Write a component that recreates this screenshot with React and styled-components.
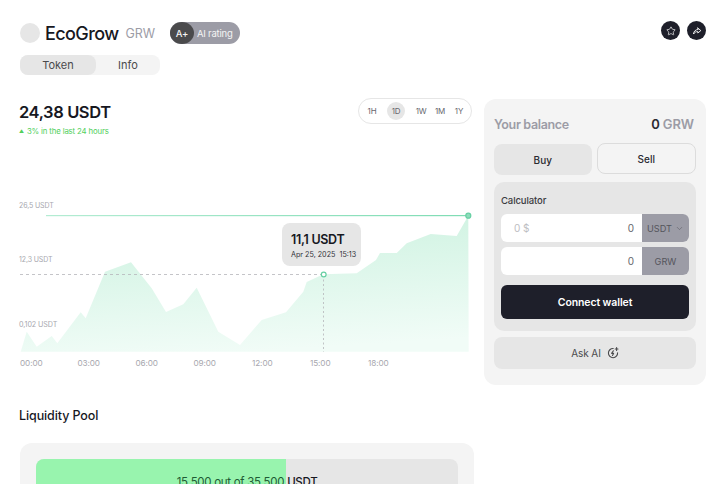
import React from "react";
import styled, { createGlobalStyle } from "styled-components";
import { Star, ChevronDown } from "lucide-react";

const Global = createGlobalStyle`
  html, body { margin: 0; padding: 0; background: #fff; height: 484px; overflow: hidden; }
  body { font-family: Inter, "Liberation Sans", sans-serif; color: #17181f; }
  * { box-sizing: border-box; }
`;
const Page = styled.div`
  width: 724px; height: 484px; overflow: hidden; padding: 21px 18px 0 19px;
`;
const Header = styled.header`display: flex; justify-content: space-between; align-items: flex-start;`;
const TitleRow = styled.div`display: flex; align-items: center; height: 24px;`;
const Logo = styled.div`width: 20px; height: 20px; border-radius: 50%; background: #e6e6e6; margin-left: 1px; margin-right: 5px;`;
const Name = styled.h1`margin: 0; font-size: 18px; font-weight: 500; letter-spacing: -0.6px;`;
const Ticker = styled.span`font-size: 12.5px; color: #9c9ca6; margin-left: 7px; letter-spacing: -0.1px;`;
const Rating = styled.div`
  display: flex; align-items: center; height: 22px; width: 70px; margin-left: 15px; border-radius: 11px;
  background: #9c9ca6; color: #f4f4f4; font-size: 9.5px; letter-spacing: -0.2px;
`;
const Grade = styled.span`
  display: flex; align-items: center; justify-content: center; width: 24px; height: 22px; border-radius: 50%;
  background: #4a4a4c; margin-right: 3px; font-weight: 500;
`;
const Tabs = styled.div`display: flex; width: 140px; height: 20px; margin: 10px 0 0 1px; background: #f4f4f4; border-radius: 8px;`;
const Tab = styled.div`
  flex: ${p => (p.$active ? "0 0 76px" : "1")}; display: flex; align-items: center; justify-content: center; font-size: 11px; color: #4a4a4c; border-radius: 8px;
  background: ${p => (p.$active ? "#e6e6e6" : "transparent")};
`;
const Actions = styled.div`display: flex; gap: 7px;`;
const IconBtn = styled.button`
  width: 19px; height: 19px; padding: 0; border: 0; border-radius: 50%; background: #1e1f2a; color: #fff;
  display: flex; align-items: center; justify-content: center;
`;
const Columns = styled.main`display: flex; align-items: flex-start; margin-top: 22px;`;
const Left = styled.section`width: 455px; margin-right: 10px;`;
const PriceRow = styled.div`display: flex; justify-content: space-between; align-items: flex-start;`;
const Price = styled.div`font-size: 16.5px; font-weight: 600; letter-spacing: -0.4px; line-height: 22px; margin-top: 4px;`;
const Change = styled.div`display: flex; align-items: center; font-size: 7.8px; color: #52cf5d; margin-top: 2px; line-height: 12px; letter-spacing: -0.15px;`;
const Arrow = styled.span`font-size: 5px; margin-right: 3px;`;
const Range = styled.div`
  display: flex; align-items: center; width: 114px; height: 26px; margin: 1px 2px 0 0; padding: 0 0 0 7px; border: 1px solid #e6e6e6; border-radius: 13px;
`;
const RangeItem = styled.span`
  font-size: 8px; color: #66666d; height: 18px; width: ${p => (p.$active ? "18px" : "12px")}; margin-left: ${p => p.$gap || 0}px; border-radius: 9px; display: flex; align-items: center; justify-content: center;
  background: ${p => (p.$active ? "#e6e6e6" : "transparent")}; letter-spacing: -0.2px;
`;
const ChartSvg = styled.svg`display: block; width: 460px; height: 260px; margin-top: -7px; margin-left: -1px;`;
const AxisText = styled.text`font-family: Inter, sans-serif; font-size: ${p => p.$size}px; fill: #a7a7ae; letter-spacing: -0.1px;`;
const Tip = styled.div`
  width: 79px; height: 43px; padding: 8.5px 0 0 9px; border-radius: 8px; background: #e6e6e6;
`;
const TipValue = styled.div`font-size: 12.5px; font-weight: 600; line-height: 16px; letter-spacing: -0.3px;`;
const TipDate = styled.div`font-size: 7.2px; line-height: 12px; margin-top: 1px; color: #33333a; white-space: nowrap;`;
const Section = styled.h2`margin: 17px 0 0 0; font-size: 12.5px; font-weight: 500; line-height: 18px; letter-spacing: -0.1px;`;
const PoolCard = styled.div`width: 454px; margin: 18px 0 0 1px; padding: 16px; background: #f4f4f4; border-radius: 12px;`;
const Pool = styled.div`position: relative; height: 40px; background: #e6e6e6; border-radius: 8px; overflow: hidden;`;
const PoolFill = styled.div`position: absolute; inset: 0 auto 0 0; background: #98f4ae;`;
const PoolText = styled.div`position: relative; text-align: center; font-size: 11.5px; line-height: 16px; padding-top: 15px; color: #1f5c35; letter-spacing: -0.3px;`;
const Dark = styled.span`color: #17181f; font-weight: 500;`;
const Panel = styled.aside`
  width: 222px; padding: 10px; margin-top: 2px; height: 286px; background: #f4f4f4; border-radius: 12px;
`;
const BalanceRow = styled.div`display: flex; justify-content: space-between; align-items: center; height: 30px; padding: 0 2px 0 0;`;
const BalanceLabel = styled.span`font-size: 12.5px; font-weight: 600; color: #9c9ca6; letter-spacing: -0.35px;`;
const BalanceValue = styled.span`font-size: 13px; font-weight: 600; color: #9c9ca6; letter-spacing: -0.1px;`;
const BalanceNum = styled.span`color: #2a2a30;`;
const TradeRow = styled.div`display: flex; gap: 5px; align-items: flex-start; margin-top: 4px;`;
const Trade = styled.button`
  flex: 1; height: 31px; font: 500 10px Inter, sans-serif; color: #2a2a30; border-radius: 8px; margin-top: ${p => (p.$active ? "1px" : "0")};
  background: ${p => (p.$active ? "#e6e6e6" : "transparent")};
  border: ${p => (p.$active ? "0" : "1px solid #dcdcdc")};
`;
const Calc = styled.div`margin-top: 7px; padding: 13px 7px 0; height: 149px; background: #e6e6e6; border-radius: 10px;`;
const CalcLabel = styled.div`font-size: 9.5px; font-weight: 500; color: #3a3a40; line-height: 12px; margin-bottom: 7px; letter-spacing: -0.1px;`;
const Field = styled.div`display: flex; height: 28px; margin-bottom: 5px; border-radius: 6px; overflow: hidden; background: #fff;`;
const FieldBody = styled.div`flex: 1; display: flex; align-items: center; justify-content: space-between; padding: 0 8px 0 13px; font-size: 10px; color: #66666d;`;
const Hint = styled.span`color: #bdbdc2;`;
const Unit = styled.div`
  width: 47px; display: flex; align-items: center; justify-content: center; gap: 3px; background: #9c9ca6; color: #55555c; font-size: 9.2px;
`;
const Connect = styled.button`
  display: block; width: 100%; height: 34px; margin-top: 10px; border: 0; border-radius: 6px; background: #1e1f2a; color: #fff;
  font: 600 10.5px Inter, sans-serif; letter-spacing: -0.1px;
`;
const Ask = styled.button`
  display: flex; align-items: center; justify-content: center; gap: 6px; width: 100%; height: 32px; margin-top: 6px; border: 0; border-radius: 8px;
  background: #e6e6e6; color: #4a4a4c; font: 400 10px Inter, sans-serif; letter-spacing: -0.1px;
`;

const pts = "20.7,351.7 26.7,331.7 36.7,346.7 51.7,336 57.3,343.3 80.7,312.3 85.7,318.3 105,271.7 131,262.3 151.7,288.3 166,312 183.3,304.3 196.7,287.7 218.3,331.7 240,345 261.7,320 286,312.3 303.3,291.7 306.7,282 323.3,274.3 356.7,273.3 376,260 380,253 396.7,253 406.7,243.3 430.7,234 456.7,236 468.3,215.7 468.7,351.7";
const OX = 18, OY = 130;

const Chart = () => (
  <ChartSvg viewBox={`${OX} ${OY} 460 260`}>
    <defs>
      <linearGradient id="area" x1="0.3" y1="0" x2="0.5" y2="1">
        <stop offset="0" stopColor="#cdf2e0" />
        <stop offset="1" stopColor="#f1fcf7" />
      </linearGradient>
      <linearGradient id="topLine" gradientUnits="userSpaceOnUse" x1="46" y1="0" x2="468" y2="0">
        <stop offset="0" stopColor="#b4ecd3" />
        <stop offset="1" stopColor="#7fdcb4" />
      </linearGradient>
    </defs>
    <polygon points={pts} fill="url(#area)" />
    <AxisText $size={7} x="19" y="207.5">26,5 USDT</AxisText>
    <AxisText $size={7} x="19" y="262">12,3 USDT</AxisText>
    <AxisText $size={7.2} x="19" y="327">0,102 USDT</AxisText>
    <rect x="46" y="215" width="422" height="1.2" fill="url(#topLine)" />
    <line x1="20" y1="274.5" x2="323" y2="274.5" stroke="#b5b5ba" strokeWidth="0.8" strokeDasharray="3 3" />
    <line x1="323.5" y1="275" x2="323.5" y2="352" stroke="#b5b5ba" strokeWidth="0.8" strokeDasharray="2 2.5" />
    <circle cx="323.7" cy="274.5" r="2.4" fill="#fff" stroke="#66d0a3" strokeWidth="1.2" />
    <circle cx="468.3" cy="215.7" r="2.5" fill="#8fdcbb" stroke="#66d0a3" strokeWidth="1.2" />
    {["00:00", "03:00", "06:00", "09:00", "12:00", "15:00", "18:00"].map((t, i) => (
      <AxisText $size={8.2} key={t} x={[20, 77.5, 135.5, 193.5, 252, 310, 368][i]} y="366">{t}</AxisText>
    ))}
    <foreignObject x="282" y="223" width="80" height="44">
      <Tip>
        <TipValue>11,1 USDT</TipValue>
        <TipDate>Apr 25, 2025&nbsp; 15:13</TipDate>
      </Tip>
    </foreignObject>
  </ChartSvg>
);

export default function App() {
  return (
    <Page>
      <Global />
      <Header>
        <div>
          <TitleRow>
            <Logo />
            <Name>EcoGrow</Name>
            <Ticker>GRW</Ticker>
            <Rating><Grade>A+</Grade>AI rating</Rating>
          </TitleRow>
          <Tabs>
            <Tab $active>Token</Tab>
            <Tab>Info</Tab>
          </Tabs>
        </div>
        <Actions>
          <IconBtn aria-label="favourite"><Star size={10} strokeWidth={1.6} /></IconBtn>
          <IconBtn aria-label="share">
            <svg width="10" height="10" viewBox="0 0 10 10" fill="none" stroke="#fff" strokeWidth="0.9" strokeLinejoin="round" strokeLinecap="round">
              <path d="M5.8 2 L8.8 4.6 L5.8 7 V5.6 C4 5.5 2.6 6.3 1.5 8 C1.7 5.4 3.3 3.7 5.8 3.5 Z" />
            </svg>
          </IconBtn>
        </Actions>
      </Header>
      <Columns>
        <Left>
          <PriceRow>
            <div>
              <Price>24,38 USDT</Price>
              <Change><Arrow>▲</Arrow>3% in the last 24 hours</Change>
            </div>
            <Range>
              <RangeItem>1H</RangeItem>
              <RangeItem $active $gap={9}>1D</RangeItem>
              <RangeItem $gap={10}>1W</RangeItem>
              <RangeItem $gap={7}>1M</RangeItem>
              <RangeItem $gap={7}>1Y</RangeItem>
            </Range>
          </PriceRow>
          <Chart />
          <Section>Liquidity Pool</Section>
          <PoolCard>
            <Pool>
              <PoolFill style={{ width: `${(250 / 422) * 100}%` }} />
              <PoolText>15 500 out of 35 500 <Dark>USDT</Dark></PoolText>
            </Pool>
          </PoolCard>
        </Left>
        <Panel>
          <BalanceRow>
            <BalanceLabel>Your balance</BalanceLabel>
            <BalanceValue><BalanceNum>0</BalanceNum> GRW</BalanceValue>
          </BalanceRow>
          <TradeRow>
            <Trade $active>Buy</Trade>
            <Trade>Sell</Trade>
          </TradeRow>
          <Calc>
            <CalcLabel>Calculator</CalcLabel>
            <Field>
              <FieldBody><Hint>0 $</Hint><span>0</span></FieldBody>
              <Unit>USDT <ChevronDown size={9} strokeWidth={1.4} /></Unit>
            </Field>
            <Field>
              <FieldBody><span /><span>0</span></FieldBody>
              <Unit>GRW</Unit>
            </Field>
            <Connect>Connect wallet</Connect>
          </Calc>
          <Ask>
            Ask AI
            <svg width="12" height="12" viewBox="0 0 12 12" fill="none" stroke="#4a4a4c" strokeWidth="1.1" strokeLinecap="round" strokeLinejoin="round">
              <path d="M6.2 1.5 A4.6 4.6 0 1 0 10.6 5.8" />
              <path d="M6.4 3.8 L4.6 6.4 H6.6 L5.5 8.4" />
              <path d="M9.6 0.6 V3.4 M8.2 2 H11" />
            </svg>
          </Ask>
        </Panel>
      </Columns>
    </Page>
  );
}
